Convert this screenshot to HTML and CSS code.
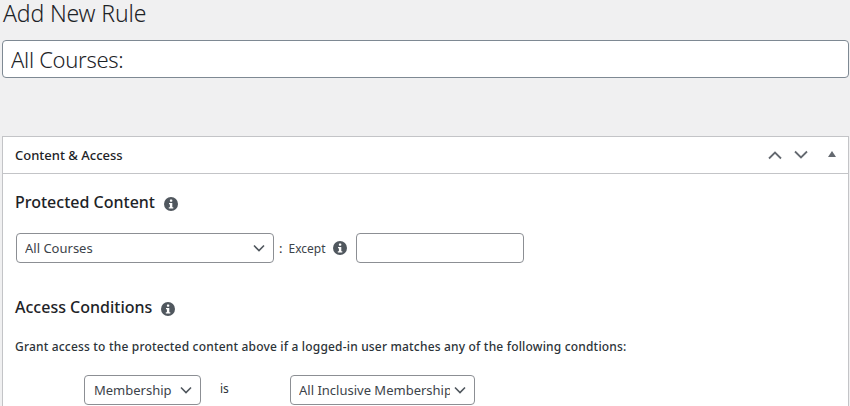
FILE: index.html
```html
<!DOCTYPE html>
<html lang="en">
<head>
<meta charset="utf-8">
<title>Add New Rule</title>
<link rel="stylesheet" href="styles.css">
</head>
<body>
<div class="wrap">
  <h1 class="page-title">Add New Rule</h1>
  <input class="title-input" type="text" value="All Courses:">
  <section class="panel">
    <header class="panel-head">
      <h2 class="panel-title">Content &amp; Access</h2>
      <div class="panel-actions">
        <svg class="chev" width="14" height="10" viewBox="0 0 14 10"><path d="M1 8.500 7 2.500l6 6" fill="none" stroke="#646970" stroke-width="1.800"/></svg>
        <svg class="chev" width="14" height="10" viewBox="0 0 14 10"><path d="M1 1.500l6 6 6-6" fill="none" stroke="#646970" stroke-width="1.800"/></svg>
        <svg class="tri" width="8" height="6" viewBox="0 0 8 6"><path d="M4 0 8 6H0z" fill="#646970"/></svg>
      </div>
    </header>
    <div class="panel-body">
      <h3 class="section-title">Protected Content
        <svg class="info" width="14" height="14" viewBox="0 0 14 14"><circle cx="7" cy="7" r="7" fill="#50575e"/><rect x="5.900" y="2.500" width="2.400" height="2.200" rx=".6" fill="#fff"/><path d="M5 6h3.300v4.300H9.300v1.200H4.800v-1.200h1.100V7.200H5z" fill="#fff"/></svg>
      </h3>
      <div class="content-row">
        <select class="field sel-content"><option>All Courses</option></select>
        <span class="colon">:</span>
        <span class="except">Except</span>
        <svg class="info" width="14" height="14" viewBox="0 0 14 14"><circle cx="7" cy="7" r="7" fill="#50575e"/><rect x="5.900" y="2.500" width="2.400" height="2.200" rx=".6" fill="#fff"/><path d="M5 6h3.300v4.300H9.300v1.200H4.800v-1.200h1.100V7.200H5z" fill="#fff"/></svg>
        <input class="field except-input" type="text">
      </div>
      <h3 class="section-title access">Access Conditions
        <svg class="info" width="14" height="14" viewBox="0 0 14 14"><circle cx="7" cy="7" r="7" fill="#50575e"/><rect x="5.900" y="2.500" width="2.400" height="2.200" rx=".6" fill="#fff"/><path d="M5 6h3.300v4.300H9.300v1.200H4.800v-1.200h1.100V7.200H5z" fill="#fff"/></svg>
      </h3>
      <p class="grant">Grant access to the protected content above if a logged-in user matches any of the following condtions:</p>
      <div class="cond-row">
        <select class="field sel-type"><option>Membership</option></select>
        <span class="is">is</span>
        <select class="field sel-member"><option>All Inclusive Membership</option></select>
      </div>
    </div>
  </section>
</div>
</body>
</html>
```

FILE: styles.css
```css
html, body {
  margin: 0;
  padding: 0;
  height: 406px;
  overflow: hidden;
  background: #f0f0f1;
  color: #2c3338;
  font-family: "Noto Sans", "Open Sans", sans-serif;
}
.wrap {
  padding: 0 1px 0 2px;
}
.page-title {
  box-sizing: border-box;
  height: 40px;
  margin: 0;
  padding-left: 1px;
  font-size: 23px;
  line-height: 26px;
  font-weight: 300;
  color: #1d2327;
  letter-spacing: -.15px;
}
.title-input {
  display: block;
  box-sizing: border-box;
  width: 100%;
  height: 38px;
  margin: 0;
  padding: 0 8px;
  border: 1px solid #7e8993;
  border-radius: 4px;
  background: #fff;
  color: #1d2327;
  font: 300 22px "Noto Sans", sans-serif;
  letter-spacing: -.3px;
}
.panel {
  height: 300px;
  margin-top: 58px;
  border: 1px solid #c3c4c7;
  border-bottom: 0;
  background: #fff;
}
.panel-head {
  display: flex;
  align-items: center;
  justify-content: space-between;
  box-sizing: border-box;
  height: 37px;
  padding: 0 12px;
  border-bottom: 1px solid #c3c4c7;
}
.panel-title {
  margin: 0;
  font-size: 13px;
  font-weight: 500;
  color: #1d2327;
}
.panel-actions {
  display: flex;
  align-items: center;
  gap: 12px;
}
.tri {
  margin: -2px 0 0 8px;
}
.panel-body {
  padding: 0 12px;
}
.section-title {
  display: flex;
  align-items: center;
  gap: 9px;
  margin: 0;
  padding-top: 17px;
  font-size: 16px;
  line-height: 22px;
  font-weight: 500;
  color: #1d2327;
}
.section-title .info {
  margin-top: 4px;
}
.content-row {
  display: flex;
  align-items: center;
  margin-top: 20px;
  padding-left: 1px;
}
.field {
  box-sizing: border-box;
  height: 30px;
  margin: 0;
  border: 1px solid #8c8f94;
  border-radius: 4px;
  background-color: #fff;
  color: #3c434a;
  font: 400 13px "Noto Sans", sans-serif;
}
select.field {
  appearance: none;
  padding: 0 24px 0 8px;
  background-image: url("data:image/svg+xml;utf8,<svg xmlns='http://www.w3.org/2000/svg' width='12' height='8' viewBox='0 0 12 8'><path d='M1 1.500l5 5 5-5' fill='none' stroke='%2350575e' stroke-width='1.600'/></svg>");
  background-repeat: no-repeat;
  background-position: right 8px center;
}
.sel-content {
  width: 258px;
}
.colon {
  margin-left: 5px;
  font-size: 13px;
}
.except {
  margin-left: 6px;
  font-size: 12px;
  color: #3c434a;
}
.content-row .info {
  margin-left: 7px;
}
.except-input {
  width: 168px;
  margin-left: 9px;
}
.access {
  padding-top: 33px;
}
.grant {
  margin: 20px 0 0;
  font-size: 12px;
  line-height: 18px;
  font-weight: 500;
  color: #2c3338;
  letter-spacing: .18px;
}
.cond-row {
  display: flex;
  align-items: center;
  margin-top: 19px;
  padding-left: 69px;
}
select.sel-type {
  width: 117px;
  padding-left: 9px;
}
.is {
  box-sizing: border-box;
  width: 89px;
  margin-top: -3px;
  padding-left: 19px;
  font-size: 12px;
}
.sel-member {
  width: 185px;
}
```
